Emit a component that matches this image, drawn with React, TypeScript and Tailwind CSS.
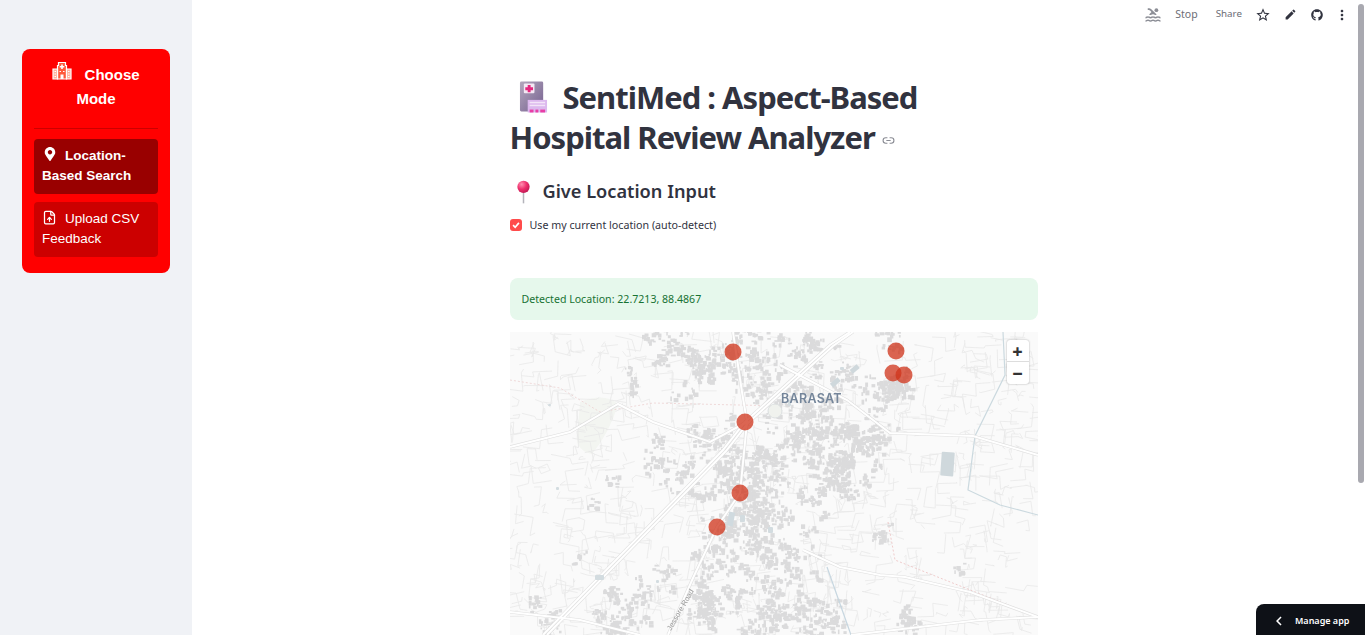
import React from 'react';
import { FileUp } from 'lucide-react';
import { FaGithub, FaMapMarkerAlt } from 'react-icons/fa';
import { MdEdit, MdMoreVert, MdPool, MdStarBorder, MdChevronLeft } from 'react-icons/md';

// small seeded random so the map looks the same on every load
function seeded(seed: number) {
  let a = seed;
  return () => {
    a = (a + 0x6d2b79f5) | 0;
    let t = Math.imul(a ^ (a >>> 15), 1 | a);
    t = (t + Math.imul(t ^ (t >>> 7), 61 | t)) ^ t;
    return ((t ^ (t >>> 14)) >>> 0) / 4294967296;
  };
}

// cx, cy, spread, number of clumps
const clusters = [
  [195, 25, 30, 30], [250, 30, 32, 36], [150, 10, 18, 10], [300, 15, 22, 14], [330, 45, 20, 12], [385, 55, 14, 16], [375, 10, 12, 6],
  [240, 150, 30, 60], [205, 110, 22, 22], [175, 150, 16, 10], [300, 100, 26, 40], [345, 110, 24, 36], [320, 150, 28, 36],
  [285, 60, 16, 10], [225, 200, 30, 52], [275, 225, 22, 18], [145, 125, 14, 8], [100, 150, 10, 3], [125, 45, 8, 3],
  [195, 270, 26, 36], [265, 285, 30, 40], [110, 285, 26, 26], [45, 290, 18, 8], [150, 250, 16, 8],
  [320, 280, 18, 12], [395, 285, 10, 8], [375, 205, 10, 4], [450, 235, 3, 1], [80, 170, 6, 2], [65, 225, 6, 2], [25, 265, 10, 2],
];

const random = seeded(42);
const gauss = () => (random() + random() + random() - 1.5) / 1.5;

// every clump is a few touching blocks, which reads as a built-up blob
const buildings = clusters.flatMap(([cx, cy, r, n]) =>
  Array.from({ length: n }).flatMap(() => {
    const ox = cx + gauss() * r * 1.9;
    const oy = cy + gauss() * r * 1.9;
    const blocks = 3 + Math.floor(random() * 7);
    return Array.from({ length: blocks }, () => ({
      x: ox + (random() - 0.5) * 11,
      y: oy + (random() - 0.5) * 11,
      w: 1.5 + random() * 3.5,
      h: 1.5 + random() * 3.5,
    }));
  })
);

// thin side streets, short bent polylines that mostly run along one axis
const streets = Array.from({ length: 700 }, () => {
  let x = random() * 528;
  let y = random() * 303;
  const points = [`${x.toFixed(1)},${y.toFixed(1)}`];
  const steps = 2 + Math.floor(random() * 3);
  for (let i = 0; i < steps; i++) {
    if (i % 2 === 0) {
      x += (random() - 0.5) * 40;
      y += (random() - 0.5) * 8;
    } else {
      x += (random() - 0.5) * 8;
      y += (random() - 0.5) * 40;
    }
    points.push(`${x.toFixed(1)},${y.toFixed(1)}`);
  }
  return points.join(' ');
});

const roads = [
  '33,303 213,118 235,90 320,13 340,0',
  '37,303 216,119 238,91 323,14 343,0',
  '158,303 183,246 207,195 230,161 237,90 232,60 223,0',
  '270,33 337,68 380,101 463,104 528,123',
  '293,218 330,235 370,243 395,245 460,260 528,285',
  '341,303 470,288 528,285',
  '0,115 60,100 108,72 143,90 200,110 237,90',
  '0,280 70,288 130,303',
];

const ponds = [
  [230, 183, 5, 7], [258, 195, 5, 6], [46, 155, 3, 3], [85, 243, 9, 5], [146, 248, 3, 3], [330, 35, 4, 3], [38, 72, 3, 2], [278, 68, 3, 6],
];

const markers = [
  [223, 20], [386, 19], [383, 41], [394, 43], [235, 90], [230, 161], [207, 195],
];

const HospitalEmoji = () => (
  <svg viewBox="0 0 30 32" className="h-[32px] w-[29px]">
    <defs>
      <linearGradient id="wall" x1="0" y1="0" x2="1" y2="1">
        <stop offset="0" stopColor="#b3a7bd" />
        <stop offset="1" stopColor="#75608f" />
      </linearGradient>
    </defs>
    <rect x="1" y="0" width="24" height="31" rx="1.5" fill="url(#wall)" />
    <rect x="5" y="2" width="11" height="10" rx="1" fill="#f3e8f4" />
    <path d="M9 3.5h3v2.5h2.500v3H12v2H9V9H6.500V6H9z" fill="#e5277f" />
    <rect x="9" y="19" width="20" height="13" fill="#dcb8ee" />
    <rect x="11" y="21" width="16" height="1.500" fill="#f3e4f8" />
    <rect x="11" y="24" width="16" height="1.500" fill="#f3e4f8" />
    <rect x="11" y="29" width="4" height="3" fill="#e83ea6" />
    <rect x="17" y="29" width="3" height="3" fill="#e83ea6" />
    <rect x="22" y="29" width="5" height="3" fill="#e83ea6" />
  </svg>
);

const PinEmoji = () => (
  <svg viewBox="0 0 18 24" className="h-[24px] w-[17px] shrink-0">
    <defs>
      <radialGradient id="pin" cx="0.35" cy="0.3" r="0.8">
        <stop offset="0" stopColor="#ff8fb0" />
        <stop offset="0.5" stopColor="#ee2f6c" />
        <stop offset="1" stopColor="#b8154f" />
      </radialGradient>
    </defs>
    <rect x="8.200" y="10" width="1.600" height="14" fill="#b4b4bb" />
    <circle cx="9" cy="6.500" r="6.500" fill="url(#pin)" />
  </svg>
);

const HospitalOutline = () => (
  <svg viewBox="0 0 20 20" className="inline-block h-[20px] w-[20px] align-[-1px]" fill="none">
    <path d="M6.500 1.500h7v3h1V18h-9V4.500h1z" stroke="#fff" strokeWidth="1.200" fill="#ff5a3c" />
    <path d="M1 8h4.500v10H1zM14.500 8H19v10h-4.500z" stroke="#fff" strokeWidth="1.200" fill="#ffb09c" />
    <path d="M9.200 3.500h1.600V5h1.500v1.600h-1.500v1.500H9.200V6.600H7.700V5h1.500z" fill="#fff" />
    <path d="M8.500 18v-4.500h3V18z" fill="#fff" />
    <path d="M7.500 10.500h1.500M11 10.500h1.500M2.500 10.500h1.500M2.500 13h1.500M2.500 15.500h1.500M16 10.500h1.500M16 13h1.500M16 15.500h1.500" stroke="#fff" strokeWidth="1.100" />
  </svg>
);

const MapPanel = () => (
  <div className="relative h-[303px] w-full overflow-hidden bg-[#fafafa]">
    <svg viewBox="0 0 528 303" className="block h-[303px] w-[528px] blur-[0.3px]">
      <path d="M70,70 Q95,60 108,72 Q100,100 82,122 Q62,118 68,95z" fill="#f3f5f1" />
      {streets.map((points, i) => (
        <polyline key={i} points={points} fill="none" stroke="#e9e9e9" strokeWidth="0.800" />
      ))}
      <path d="M0,48 50,56 90,80 143,71 272,74" fill="none" stroke="#ecd0d0" strokeWidth="0.800" strokeDasharray="2 2" />
      <path d="M378,190 385,228 528,285" fill="none" stroke="#ecc0c0" strokeWidth="0.800" strokeDasharray="2 2" />
      {buildings.map((b, i) => (
        <rect key={i} x={b.x} y={b.y} width={b.w} height={b.h} fill="#dbdbdc" />
      ))}
      <path d="M493,0 495,43 465,104 458,158 490,173 528,183" fill="none" stroke="#cbd9df" strokeWidth="1.200" />
      <path d="M317,235 341,303" fill="none" stroke="#c6d6e0" strokeWidth="1.200" />
      {roads.map((points, i) => (
        <polyline key={i} points={points} fill="none" stroke="#dfdfdf" strokeWidth="3.200" />
      ))}
      {roads.map((points, i) => (
        <polyline key={i} points={points} fill="none" stroke="#ffffff" strokeWidth="2" />
      ))}
      {ponds.map(([x, y, w, h], i) => (
        <rect key={i} x={x} y={y} width={w} height={h} rx="1" fill="#d3dce0" />
      ))}
      <rect x="431" y="120" width="13" height="24" rx="1" fill="#cfd8dc" transform="rotate(4 437 132)" />
      <ellipse cx="265" cy="79" rx="7" ry="7" fill="#f0f2ee" stroke="#dbdfe0" />
      <rect x="320" y="48" width="10" height="5" fill="#cfd8dc" transform="rotate(-40 325 50)" />
      <rect x="340" y="35" width="9" height="5" fill="#cfd8dc" transform="rotate(-40 344 37)" />
      <rect x="218" y="180" width="6" height="14" fill="#d0dadf" transform="rotate(10 221 187)" />
      <text x="271" y="71" fontFamily="Inter, sans-serif" fontSize="12.500" fontWeight="600" letterSpacing="0.3" fill="#74859a">
        BARASAT
      </text>
      <text x="0" y="0" transform="translate(161,299) rotate(-60)" fontFamily="'Liberation Sans', sans-serif" fontSize="7.500" fill="#9a9a9a">
        Jessore Road
      </text>
      {markers.map(([x, y], i) => (
        <circle key={i} cx={x} cy={y} r="8.500" fill="#d0351c" fillOpacity="0.76" />
      ))}
    </svg>
    <div className="absolute top-2 right-[9px] w-[22px] rounded-[3px] bg-white text-[#333] shadow-[0_0_2px_rgba(0,0,0,0.35)]">
      <div className="flex h-[22px] items-center justify-center border-b border-[#ddd] text-[18px] leading-none font-extrabold">+</div>
      <div className="flex h-[22px] items-center justify-center text-[18px] leading-none font-extrabold">−</div>
    </div>
  </div>
);

export default function App() {
  return (
    <div className="relative flex h-screen overflow-hidden bg-white font-['Noto_Sans',sans-serif] text-[#31333f]">
      <aside className="w-[192px] shrink-0 bg-[#f0f2f6] px-[22px] pt-[49px]">
        <div className="h-[224px] rounded-lg bg-[#ff0000] px-3 pt-[12px] font-['Liberation_Sans',sans-serif] text-white">
          <h2 className="text-center text-[15px] leading-6 font-bold">
            <HospitalOutline /> <span className="ml-2">Choose</span> Mode
          </h2>
          <div className="mt-[17px] h-px bg-[#cc0000]" />
          <div className="mt-[10px] h-[55px] rounded bg-[#990000] px-2 pt-[7px] text-[13.500px] leading-5 font-bold">
            <FaMapMarkerAlt className="mr-[8px] ml-[1px] inline-block align-[-1px] text-[14px]" />
            Location-Based Search
          </div>
          <div className="mt-2 h-[55px] rounded bg-[#cc0000] px-2 pt-[7px] text-[13.500px] leading-5">
            <FileUp className="mr-[8px] inline-block h-[15px] w-[15px] align-[-2px]" strokeWidth={2} />
            Upload CSV Feedback
          </div>
        </div>
      </aside>

      <main className="relative min-w-0 flex-1 pr-[3px]">
        <header className="absolute top-0 right-0 flex h-[29px] items-center text-[#6b6d76]">
          <MdPool className="h-[18px] w-[18px] text-[#8c8e96]" />
          <span className="ml-[13px] text-[10.500px]">Stop</span>
          <span className="ml-[18px] text-[9.800px]">Share</span>
          <MdStarBorder className="ml-[13px] h-[16px] w-[16px] text-[#31333f]" />
          <MdEdit className="ml-[13px] h-[13px] w-[13px] text-[#31333f]" />
          <FaGithub className="ml-[14px] h-[12px] w-[12px] text-[#31333f]" />
          <MdMoreVert className="mr-[8px] ml-[11px] h-[16px] w-[16px] text-[#31333f]" />
        </header>

        <div className="mx-auto w-[528px] pt-[77px]">
          <h1 className="text-[31px] leading-10 font-bold tracking-[-1px]">
            <span className="relative mr-[53px] inline-block h-px w-0 align-baseline">
              <span className="absolute top-[-27px] left-[9px]">
                <HospitalEmoji />
              </span>
            </span>
            SentiMed : Aspect-Based
            <br />
            Hospital Review Analyzer
            <svg viewBox="0 0 24 24" className="ml-[7px] inline-block h-[13px] w-[13px] align-[2px]" fill="none" stroke="#8a8c94" strokeWidth="2">
              <path d="M10 7H7a5 5 0 0 0 0 10h3M14 7h3a5 5 0 0 1 0 10h-3M8 12h8" />
            </svg>
          </h1>

          <h3 className="mt-[21px] flex h-7 items-center text-[18.200px] font-semibold">
            <span className="mr-[11px] ml-[5px]">
              <PinEmoji />
            </span>
            Give Location Input
          </h3>

          <label className="mt-[9px] flex h-5 items-center text-[10.700px]">
            <span className="mr-2 flex h-3 w-3 items-center justify-center rounded-[3px] bg-[#ff4b4b]">
              <svg viewBox="0 0 12 12" className="h-[10px] w-[10px]" fill="none" stroke="#fff" strokeWidth="2">
                <path d="M2.500 6.200 5 8.700 9.500 3.500" />
              </svg>
            </span>
            Use my current location (auto-detect)
          </label>

          <div className="mt-[43px] flex h-[42px] items-center rounded-lg bg-[#e6f8ec] px-3 pt-[2px] text-[10.600px] text-[#177233]">
            Detected Location: 22.7213, 88.4867
          </div>

          <div className="mt-3">
            <MapPanel />
          </div>
        </div>
      </main>

      <div className="w-[7px] shrink-0 bg-white pt-1">
        <div className="h-[479px] w-[6px] rounded-full bg-[#a9a9b0]" />
      </div>

      <div className="absolute right-0 bottom-0 flex h-[31px] w-[109px] items-center rounded-tl-lg bg-[#0e1117] pt-[2px] pl-[14px] text-[9px] font-semibold text-white">
        <MdChevronLeft className="h-[18px] w-[18px]" />
        <span className="ml-[7px]">Manage app</span>
      </div>
    </div>
  );
}
